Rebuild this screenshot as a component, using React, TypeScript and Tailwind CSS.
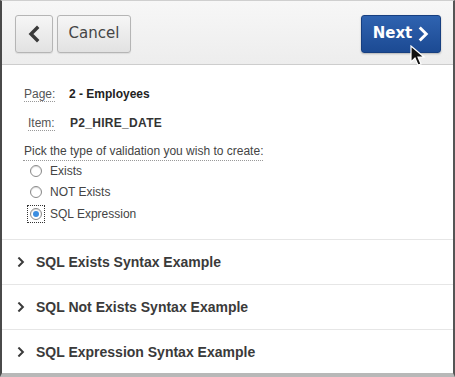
import React from "react";

const Chevron = ({ dir, className, w = 3 }: { dir: "left" | "right"; className?: string; w?: number }) => (
  <svg viewBox="0 0 12 16" className={className} fill="none" stroke="currentColor" strokeWidth={w} strokeLinecap="square">
    {dir === "left" ? <path d="M9 2 L3 8 L9 14" /> : <path d="M3 2 L9 8 L3 14" />}
  </svg>
);

const Radio = ({ checked }: { checked?: boolean }) => (
  <span className="w-[12px] h-[12px] rounded-full border border-[#8a8a8a] bg-white flex items-center justify-center shadow-[inset_0_1px_1px_rgba(0,0,0,0.15)]">
    {checked && <span className="w-[6px] h-[6px] rounded-full bg-[#3b8de0]" />}
  </span>
);

export default function App() {
  const rows = ["SQL Exists Syntax Example", "SQL Not Exists Syntax Example", "SQL Expression Syntax Example"];
  return (
    <div className="w-[455px] h-[377px] bg-white border-l-2 border-l-[#4a4a4a] border-r-2 border-r-[#555] border-t border-t-[#cfcfcf] border-b-[4px] border-b-[#b8b8b8] overflow-hidden relative" style={{ fontFamily: '"Liberation Sans", Arial, sans-serif' }}>
      {/* header */}
      <div className="h-[64px] bg-gradient-to-b from-[#f7f7f7] to-[#ededed] border-b border-[#cdcdcd] flex items-center px-[13px] pt-[2px]" style={{ fontFamily: '"DejaVu Sans", sans-serif' }}>
        <button className="w-[38px] h-[38px] rounded-[3px] border border-[#b5b5b5] bg-gradient-to-b from-[#f6f6f6] to-[#e2e2e2] flex items-center justify-center text-[#3a3a3a] shadow-[0_1px_1px_rgba(0,0,0,0.08)]">
          <Chevron dir="left" className="w-[12px] h-[18px]" w={3.4} />
        </button>
        <button className="ml-[4px] w-[74px] h-[38px] rounded-[3px] border border-[#b5b5b5] bg-gradient-to-b from-[#f6f6f6] to-[#e2e2e2] text-[15px] text-[#454545] shadow-[0_1px_1px_rgba(0,0,0,0.08)]">
          Cancel
        </button>
        <div className="flex-1" />
        <button className="mr-[-1px] w-[80px] h-[38px] rounded-[3px] border border-[#173f80] bg-gradient-to-b from-[#2f63b0] to-[#1c4a93] text-white text-[15px] font-bold flex items-center justify-center gap-[6px] shadow-[0_1px_2px_rgba(0,0,0,0.25)]">
          Next
          <Chevron dir="right" className="w-[11px] h-[18px]" w={3.2} />
        </button>
      </div>

      {/* form */}
      <div className="px-[21px] pt-[21px] text-[12px] text-[#333]">
        <div className="flex items-center h-[16px]">
          <span className="w-[46px] text-[#555] pl-[1px]"><span className="border-b border-dotted border-[#999]">Page:</span></span>
          <span className="font-bold text-[12px] text-[#222]">2 - Employees</span>
        </div>
        <div className="flex items-center h-[16px] mt-[13px]">
          <span className="w-[47px] text-[#555] pl-[5px]"><span className="border-b border-dotted border-[#999]">Item:</span></span>
          <span className="font-bold text-[12px] text-[#333] tracking-[0.3px]">P2_HIRE_DATE</span>
        </div>
        <div className="mt-[12px] h-[16px] flex items-center">
          <span className="border-b border-dotted border-[#999] text-[#444] pl-[1px]">Pick the type of validation you wish to create:</span>
        </div>
        <div className="flex flex-col mt-[1px]">
          <label className="flex items-center h-[21px] pl-[7px] gap-[8px] text-[#444]">
            <Radio /> Exists
          </label>
          <label className="flex items-center h-[22px] pl-[7px] gap-[8px] text-[#444]">
            <Radio /> NOT Exists
          </label>
          <label className="flex items-center h-[22px] pl-[4px] gap-[5px] text-[#444]">
            <span className="p-[2px] border border-dotted border-[#333]"><Radio checked /></span> SQL Expression
          </label>
        </div>
      </div>

      {/* accordions */}
      <div className="mt-[14px]">
        {rows.map((r) => (
          <div key={r} className="h-[45px] border-t border-[#e6e6e6] flex items-center pl-[15px] gap-[11px] text-[#3a3a3a]">
            <Chevron dir="right" className="w-[8px] h-[10px]" w={3.2} />
            <span className="text-[14px] font-bold">{r}</span>
          </div>
        ))}
      </div>

      {/* cursor */}
      <svg className="absolute left-[408px] top-[44px]" width="18" height="24" viewBox="0 0 18 24">
        <path d="M1 1 L1 17 L5 13 L8 20 L11 19 L8 12 L14 12 Z" fill="#111" stroke="#fff" strokeWidth="1.2" />
      </svg>
    </div>
  );
}
